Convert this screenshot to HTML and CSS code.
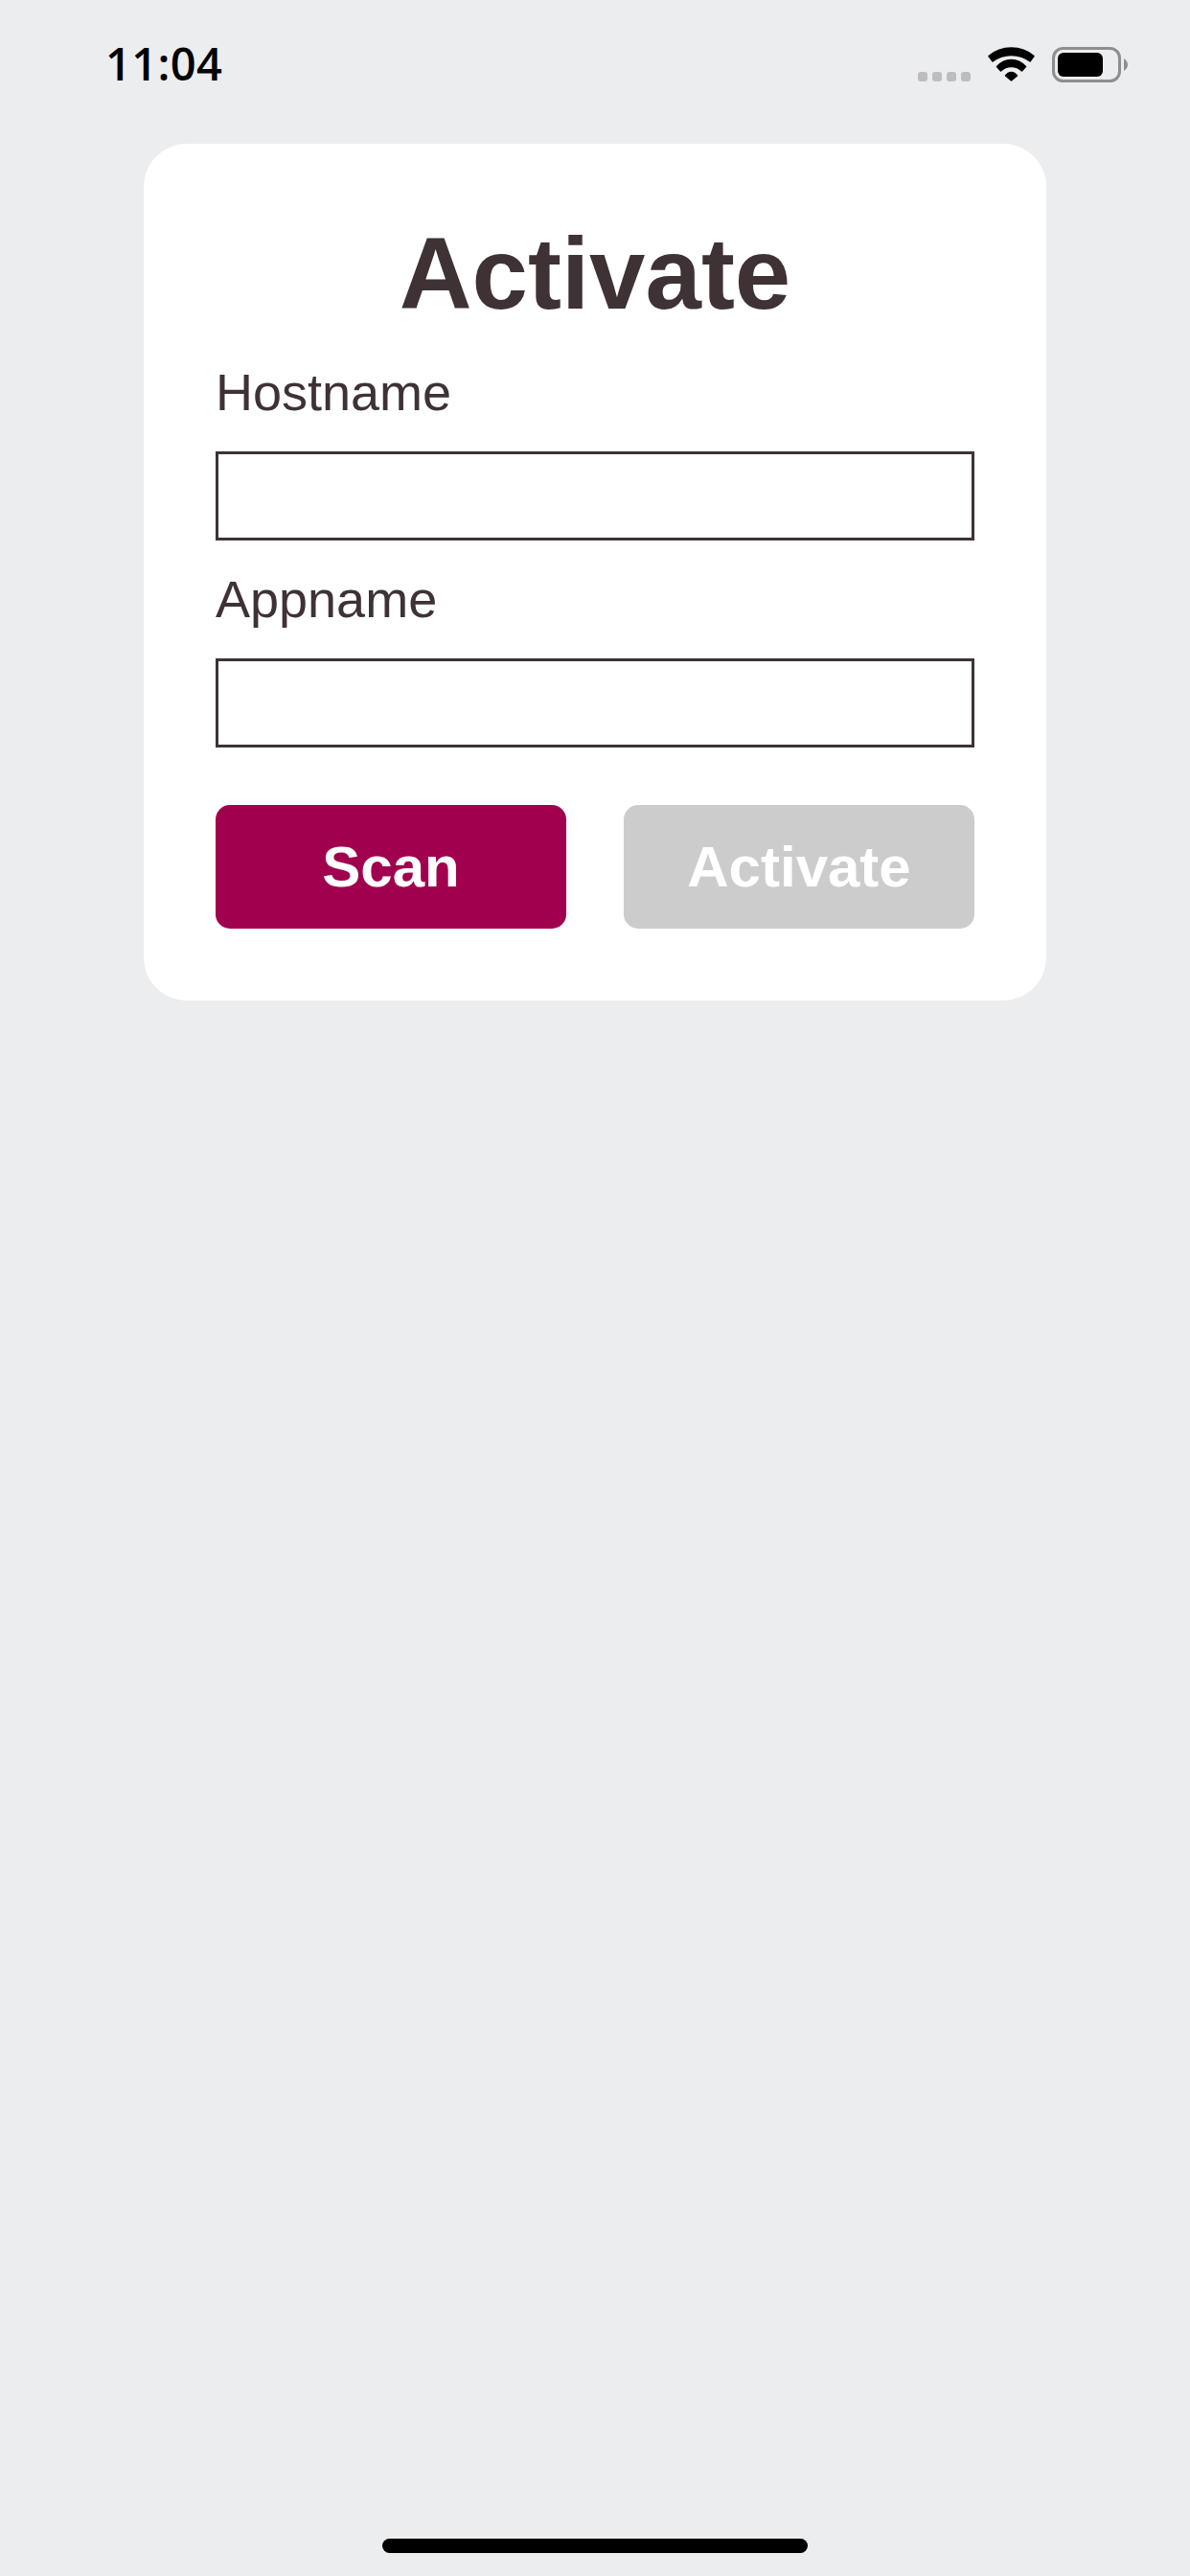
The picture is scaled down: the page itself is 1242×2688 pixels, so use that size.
FILE: index.html
```html
<!DOCTYPE html>
<html lang="en">
<head>
    <meta charset="UTF-8">
    <meta name="viewport" content="width=device-width, initial-scale=1.0">
    <title>Activate</title>
    <link rel="stylesheet" href="styles.css">
</head>
<body>
    <div class="screen">
        <!-- Status Bar -->
        <div class="status-bar">
            <span class="time">11:04</span>
            <div class="status-icons">
                <div class="signal">
                    <span></span><span></span><span></span><span></span>
                </div>
                <svg class="wifi" width="49" height="36" viewBox="0 0 49 36">
                    <g fill="#000" stroke="#000" stroke-width="1.5" stroke-linejoin="round">
                        <path d="M1 9.5 Q11 1 24.5 1 Q38 1 48 9.5 L44 15 Q35 8.5 24.5 8.5 Q14 8.5 5 15 Z"/>
                        <path d="M9.5 20.5 Q16 13.5 24.5 13.5 Q33 13.5 39.5 20.5 L35.5 25 Q31 20.5 24.5 20.5 Q18 20.5 13.5 25 Z"/>
                        <path d="M18.5 30 Q21 26.5 24.5 26.5 Q28 26.5 30.5 30 L24.5 35 Z"/>
                    </g>
                </svg>
                <svg class="battery" width="79" height="37" viewBox="0 0 79 37">
                    <rect x="1.5" y="1.5" width="69" height="34" rx="10" fill="none" stroke="#8e8e90" stroke-width="3"/>
                    <rect x="6" y="6" width="47" height="25" rx="6" fill="#000"/>
                    <path d="M75 12 Q79 15 79 18.5 Q79 22 75 25 Z" fill="#8e8e90"/>
                </svg>
            </div>
        </div>

        <!-- Activate Form -->
        <div class="card">
            <h1>Activate</h1>
            <div class="form-group">
                <label for="hostname">Hostname</label>
                <input type="text" id="hostname">
            </div>
            <div class="form-group">
                <label for="appname">Appname</label>
                <input type="text" id="appname">
            </div>
            <div class="actions">
                <button class="btn btn-scan">Scan</button>
                <button class="btn btn-activate" disabled>Activate</button>
            </div>
        </div>

        <div class="home-indicator"></div>
    </div>
</body>
</html>
```

FILE: styles.css
```css
body {
    margin: 0;
    background-color: #ecedef;
    font-family: "Liberation Sans", Arial, sans-serif;
    color: #3e3235;
}
.screen {
    height: 2688px;
    display: flex;
    flex-direction: column;
    box-sizing: border-box;
    padding-bottom: 24px;
}
.status-bar {
    height: 150px;
    flex-shrink: 0;
    box-sizing: border-box;
    padding: 49px 65px 0 110px;
    display: flex;
    justify-content: space-between;
    align-items: flex-start;
}
.time {
    font-family: "Open Sans", sans-serif;
    font-weight: 600;
    font-size: 47px;
    letter-spacing: 0.4px;
    line-height: 47px;
    color: #000;
    margin-top: -6px;
}
.status-icons {
    display: flex;
    align-items: flex-start;
    gap: 18px;
}
.signal {
    display: flex;
    gap: 5px;
    margin-top: 26px;
}
.signal span {
    width: 10px;
    height: 10px;
    border-radius: 3px;
    background-color: #bdbdbf;
}
.card {
    width: 942px;
    margin: 0 auto;
    box-sizing: border-box;
    padding: 75px;
    background: white;
    border-radius: 45px;
}
h1 {
    margin: 0 0 31px;
    text-align: center;
    font-size: 105px;
    line-height: 122px;
    font-weight: bold;
}
.form-group {
    margin-bottom: 30px;
}
label {
    display: block;
    font-size: 54px;
    line-height: 63px;
    margin-bottom: 30px;
}
input {
    display: block;
    width: 100%;
    height: 93px;
    box-sizing: border-box; /* Include border in height */
    border: 3px solid #3e3235;
    border-radius: 0;
    background: white;
    outline: none;
}
.actions {
    display: flex;
    justify-content: space-between;
    margin-top: 60px;
}
.btn {
    width: 366px;
    height: 129px;
    border: none;
    border-radius: 15px;
    color: white;
    font-family: inherit;
    font-size: 60px;
    font-weight: bold;
}
.btn-scan {
    background-color: #a1004f;
}
.btn-activate {
    background-color: #cccccc;
}
.home-indicator {
    width: 444px;
    height: 15px;
    margin: auto auto 0;
    border-radius: 8px;
    background-color: #000;
}
```
